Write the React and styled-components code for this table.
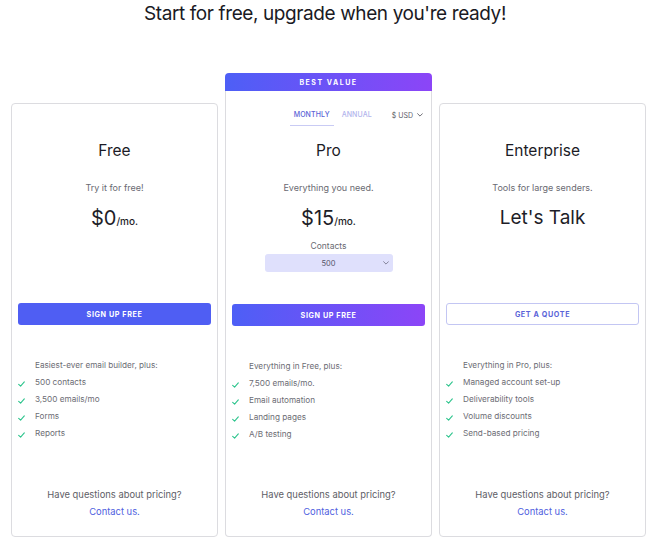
import React from "react";
import styled, { createGlobalStyle, css } from "styled-components";

const Global = createGlobalStyle`
  html, body { margin: 0; padding: 0; background: #ffffff; }
  body { font-family: Inter, "Noto Sans", sans-serif; color: #1c1c28; }
  * { box-sizing: border-box; }
`;

const Page = styled.div`
  width: 650px;
  height: 548px;
  overflow: hidden;
`;

const Title = styled.h1`
  margin: 0;
  height: 28px;
  line-height: 28px;
  font-size: 19px;
  font-weight: 400;
  text-align: center;
  color: #1a1a24;
  letter-spacing: -0.4px;
`;

const Row = styled.div`
  display: grid;
  grid-template-columns: 207px 207px 207px;
  column-gap: 7px;
  padding-left: 11px;
  margin-top: 45px;
  align-items: end;
`;

const Column = styled.div`
  display: flex;
  flex-direction: column;
`;

const Banner = styled.div`
  height: 18px;
  border-radius: 4px 4px 0 0;
  background: linear-gradient(90deg, #4d5ff6 0%, #8c45f7 100%);
  color: #ffffff;
  font-size: 7px;
  font-weight: 700;
  letter-spacing: 1.5px;
  display: flex;
  align-items: center;
  justify-content: center;
`;

const Card = styled.div`
  border: 1px solid #dcdce0;
  border-radius: ${(p) => (p.$featured ? "0 0 4px 4px" : "4px")};
  border-top: ${(p) => (p.$featured ? "none" : "1px solid #dcdce0")};
  height: ${(p) => p.$h}px;
  display: flex;
  flex-direction: column;
  padding: 0 6px 16px;
`;

const Top = styled.div`
  height: ${(p) => p.$h}px;
  display: flex;
  flex-direction: column;
  align-items: center;
`;

const Tabs = styled.div`
  align-self: stretch;
  display: flex;
  align-items: center;
  justify-content: flex-end;
  margin-top: 13px;
  height: 22px;
  padding-right: 2px;
`;

const Tab = styled.div`
  height: 22px;
  padding: 0 4px;
  display: flex;
  align-items: center;
  font-size: 7px;
  font-weight: 500;
  letter-spacing: 0.1px;
  color: ${(p) => (p.$active ? "#5a62d6" : "#b1b4ec")};
  border-bottom: 1px solid ${(p) => (p.$active ? "#c9cbf4" : "transparent")};
  margin-right: ${(p) => p.$mr || 0}px;
`;

const Currency = styled.div`
  display: flex;
  align-items: center;
  gap: 4px;
  font-size: 7px;
  color: #606068;
  height: 22px;
`;

const PlanName = styled.div`
  margin-top: ${(p) => p.$mt}px;
  font-size: 15.5px;
  line-height: 20px;
  color: #1b1b26;
`;

const Sub = styled.div`
  margin-top: 20px;
  font-size: 9px;
  line-height: 14px;
  color: #6a6a72;
`;

const Price = styled.div`
  margin-top: 11px;
  line-height: 24px;
  font-size: 20px;
  color: #1e1e28;
  display: flex;
  align-items: baseline;
`;

const Per = styled.span`
  font-size: 10px;
  font-weight: 500;
`;

const Talk = styled.div`
  margin-top: 11px;
  font-size: 19px;
  line-height: 24px;
  color: #1e1e28;
`;

const Label = styled.div`
  margin-top: 6px;
  font-size: 8.5px;
  line-height: 14px;
  color: #6a6a72;
`;

const Select = styled.div`
  margin-top: 1px;
  width: 128px;
  height: 18px;
  border-radius: 3px;
  background: #dfe0fc;
  position: relative;
  display: flex;
  align-items: center;
  justify-content: center;
  font-size: 7.5px;
  color: #55556a;
`;

const SelectChevron = styled.span`
  position: absolute;
  right: 4px;
  top: 7px;
  display: flex;
`;

const buttonBase = css`
  height: 22px;
  border-radius: 3px;
  display: flex;
  align-items: center;
  justify-content: center;
  font-size: 7.2px;
  font-weight: 700;
  letter-spacing: 0.6px;
`;

const Button = styled.div`
  ${buttonBase};
  color: ${(p) => (p.$variant === "outline" ? "#5a63d8" : "#ffffff")};
  background: ${(p) =>
    p.$variant === "gradient"
      ? "linear-gradient(90deg, #4d5ff6 0%, #8c45f7 100%)"
      : p.$variant === "outline"
      ? "#ffffff"
      : "#4f5ef3"};
  border: ${(p) => (p.$variant === "outline" ? "1px solid #c3c6f3" : "none")};
`;

const Features = styled.div`
  margin-top: ${(p) => p.$mt}px;
  display: flex;
  flex-direction: column;
`;

const FeatIntro = styled.div`
  padding-left: 17px;
  font-size: 8.2px;
  line-height: 17px;
  color: #6c6c74;
`;

const Feat = styled.div`
  display: flex;
  align-items: center;
  gap: 10px;
  font-size: 8.2px;
  line-height: 17px;
  color: #6c6c74;
`;

const Footer = styled.div`
  margin-top: auto;
  display: flex;
  flex-direction: column;
  align-items: center;
  font-size: 9.4px;
  line-height: 17px;
  color: #5e5e66;
`;

const Link = styled.a`
  color: #4f5fe0;
  text-decoration: none;
`;

const Check = () => (
  <svg width="7" height="6" viewBox="0 0 7 6" style={{ marginTop: 3 }}>
    <path d="M0.7 3.4 L2.6 5.1 L6.3 0.9" fill="none" stroke="#2cc48c" strokeWidth="1.1" strokeLinecap="round" strokeLinejoin="round" />
  </svg>
);

const Chevron = ({ color = "#606068" }) => (
  <svg width="6" height="4" viewBox="0 0 6 4">
    <path d="M0.6 0.7 L3 3.1 L5.4 0.7" fill="none" stroke={color} strokeWidth="0.9" strokeLinecap="round" strokeLinejoin="round" />
  </svg>
);

const FeatureList = ({ intro, items, mt }) => (
  <Features $mt={mt}>
    <FeatIntro>{intro}</FeatIntro>
    {items.map((t) => (
      <Feat key={t}>
        <Check />
        <span>{t}</span>
      </Feat>
    ))}
  </Features>
);

const Questions = () => (
  <Footer>
    <div>Have questions about pricing?</div>
    <Link href="#">Contact us.</Link>
  </Footer>
);

export default function App() {
  return (
    <Page>
      <Global />
      <Title>Start for free, upgrade when you're ready!</Title>
      <Row>
        <Column>
          <Card $h={434}>
            <Top $h={199}>
              <PlanName $mt={37}>Free</PlanName>
              <Sub>Try it for free!</Sub>
              <Price>
                $0<Per>/mo.</Per>
              </Price>
            </Top>
            <Button $variant="solid">SIGN UP FREE</Button>
            <FeatureList
              mt={32}
              intro="Easiest-ever email builder, plus:"
              items={["500 contacts", "3,500 emails/mo", "Forms", "Reports"]}
            />
            <Questions />
          </Card>
        </Column>
        <Column>
          <Banner>BEST VALUE</Banner>
          <Card $featured $h={446}>
            <Top $h={213}>
              <Tabs>
                <Tab $active $mr={4}>MONTHLY</Tab>
                <Tab $mr={16}>ANNUAL</Tab>
                <Currency>
                  $ USD <Chevron />
                </Currency>
              </Tabs>
              <PlanName $mt={15}>Pro</PlanName>
              <Sub>Everything you need.</Sub>
              <Price>
                $15<Per>/mo.</Per>
              </Price>
              <Label>Contacts</Label>
              <Select>
                500
                <SelectChevron>
                  <Chevron color="#7a7a90" />
                </SelectChevron>
              </Select>
            </Top>
            <Button $variant="gradient">SIGN UP FREE</Button>
            <FeatureList
              mt={32}
              intro="Everything in Free, plus:"
              items={["7,500 emails/mo.", "Email automation", "Landing pages", "A/B testing"]}
            />
            <Questions />
          </Card>
        </Column>
        <Column>
          <Card $h={434}>
            <Top $h={199}>
              <PlanName $mt={37}>Enterprise</PlanName>
              <Sub>Tools for large senders.</Sub>
              <Talk>Let's Talk</Talk>
            </Top>
            <Button $variant="outline">GET A QUOTE</Button>
            <FeatureList
              mt={32}
              intro="Everything in Pro, plus:"
              items={["Managed account set-up", "Deliverability tools", "Volume discounts", "Send-based pricing"]}
            />
            <Questions />
          </Card>
        </Column>
      </Row>
    </Page>
  );
}
